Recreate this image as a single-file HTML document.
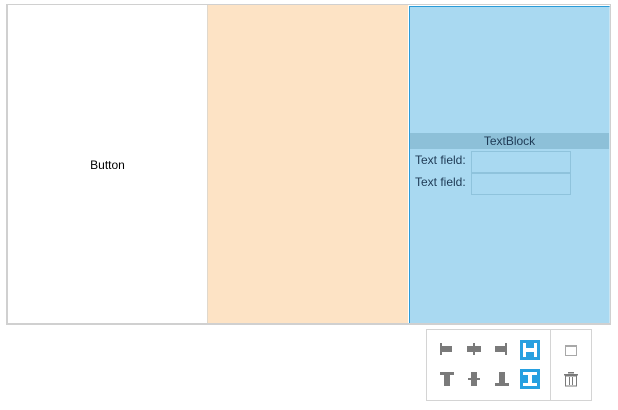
<!DOCTYPE html>
<html><head><style>
body{margin:0;width:618px;height:410px;background:#fff;position:relative;font-family:"Segoe UI","Liberation Sans",sans-serif;overflow:hidden}
.a{position:absolute;box-sizing:border-box}
</style></head><body>
<div class="a" style="left:6px;top:4px;width:605px;height:321px;border:1px solid #d0d0d0;border-left-width:2px;border-bottom-width:2px"></div>
<div class="a" style="left:8px;top:5px;width:199px;height:318px;background:#fff"></div>
<div class="a" style="left:8px;top:158px;width:199px;text-align:center;font-size:12px;color:#000">Button</div>
<div class="a" style="left:207px;top:5px;width:201px;height:318px;background:#fde3c5;border-left:1px solid #e0d8cc"></div>
<div class="a" style="left:409px;top:6px;width:201px;height:317px;background:#a9d9f1;border-left:1px solid #2a9bd8;border-top:1px solid #2a9bd8;border-right:1px solid #c8e4f2"></div>
<div class="a" style="left:410px;top:133px;width:199px;height:16px;background:#8dc0d8;text-align:center;font-size:12px;line-height:17px;color:#1e3a55">TextBlock</div>
<div class="a" style="left:415px;top:153px;font-size:12px;color:#1e3a55">Text field:</div>
<div class="a" style="left:415px;top:175px;font-size:12px;color:#1e3a55">Text field:</div>
<div class="a" style="left:471px;top:151px;width:100px;height:22px;border:1px solid #8fc3dc"></div>
<div class="a" style="left:471px;top:173px;width:100px;height:22px;border:1px solid #8fc3dc"></div>
<div class="a" style="left:426px;top:329px;width:166px;height:72px;border:1px solid #d4d4d4;background:#fff"></div>
<div class="a" style="left:550px;top:330px;width:1px;height:70px;background:#d4d4d4"></div>
<svg class="a" style="left:426px;top:329px" width="166" height="72">
<g fill="#7a7a7a">
<rect x="14" y="14" width="2" height="12"/><rect x="16" y="17" width="10" height="6"/>
<rect x="41" y="17" width="14" height="6"/><rect x="47" y="14" width="2" height="12"/>
<rect x="69" y="17" width="10" height="6"/><rect x="79" y="14" width="2" height="12"/>
<rect x="14" y="43" width="14" height="3"/><rect x="18" y="46" width="6" height="11"/>
<rect x="45" y="43" width="6" height="14"/><rect x="42" y="49" width="12" height="2"/>
<rect x="73" y="43" width="6" height="11"/><rect x="69" y="54" width="14" height="3"/>
</g>
<rect x="94" y="11" width="20" height="20" fill="#27a0e0"/>
<g fill="#fff"><rect x="97" y="14" width="3" height="14"/><rect x="108" y="14" width="3" height="14"/><rect x="100" y="19" width="8" height="4"/></g>
<rect x="94" y="40" width="20" height="20" fill="#27a0e0"/>
<g fill="#fff"><rect x="97" y="43" width="14" height="3"/><rect x="97" y="54" width="14" height="3"/><rect x="102" y="46" width="4" height="8"/></g>
<rect x="139.5" y="16.5" width="11" height="10" fill="none" stroke="#a8a8a8"/><rect x="139" y="16" width="12" height="2" fill="#a8a8a8"/>
<g fill="#7a7a7a"><rect x="138" y="45" width="14" height="1.5"/><rect x="142" y="43" width="6" height="1.5"/><rect x="139.5" y="47" width="11" height="10" fill="none" stroke="#7a7a7a"/><rect x="143" y="48" width="1" height="8"/><rect x="146" y="48" width="1" height="8"/></g>
</svg>
</body></html>
